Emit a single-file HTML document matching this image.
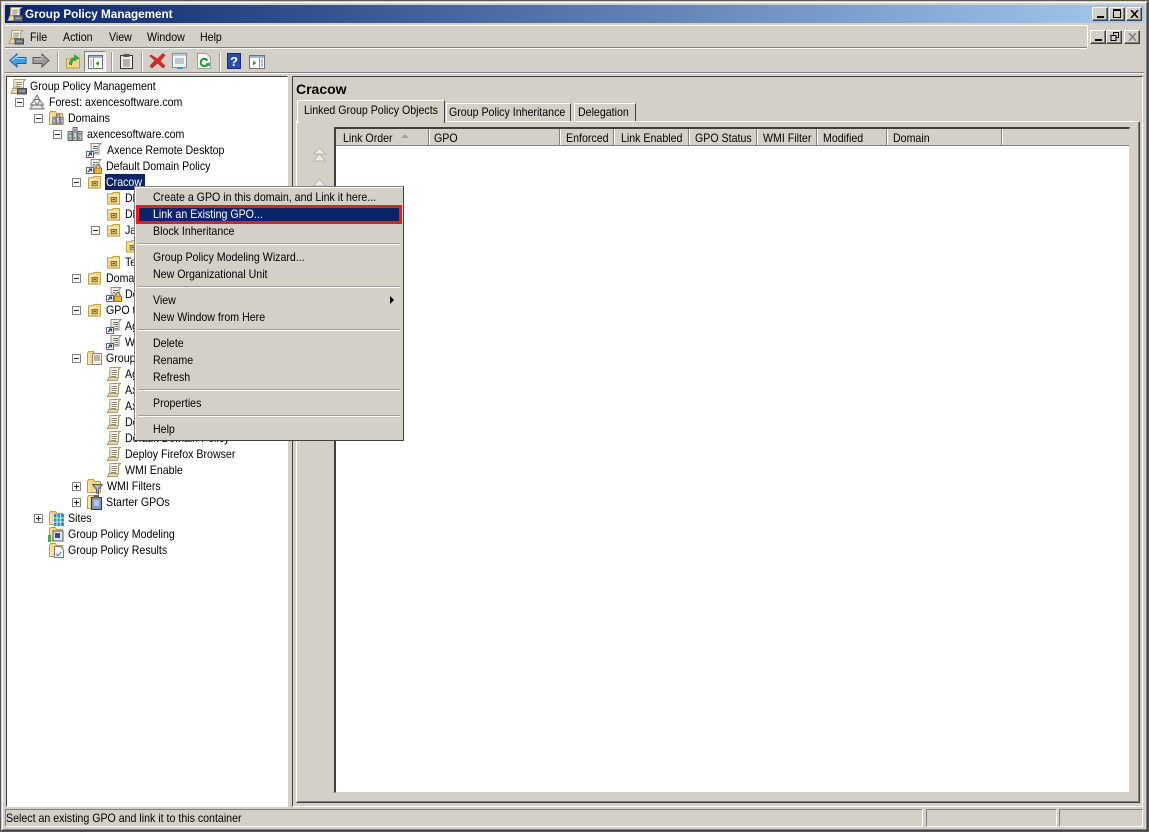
<!DOCTYPE html>
<html><head><meta charset="utf-8"><title>Group Policy Management</title>
<style>
html,body{margin:0;padding:0;background:#d4d0c8}
#w{position:relative;width:1149px;height:832px;overflow:hidden;background:#d4d0c8;font:12px "Liberation Sans",sans-serif;color:#000}
#w div,#w svg{position:absolute}
.t{position:absolute;white-space:nowrap;line-height:14px;height:14px;transform:scaleX(.885);transform-origin:0 0}
.sunk{box-sizing:border-box;border:1px solid;border-color:#808080 #fff #fff #808080}
.box{width:7px;height:7px;margin:1px 0 0 1px;background:#fff;border:1px solid #808080;box-sizing:content-box}
.box:before{content:"";position:absolute;left:1px;top:3px;width:5px;height:1px;background:#222}
.pl:after{content:"";position:absolute;left:3px;top:1px;width:1px;height:5px;background:#222}
.sep{height:1px;background:#a09d98;border-bottom:1px solid #fff;left:138px;width:262px}
.tb{width:1px;height:20px;background:#a09d98;box-shadow:1px 0 0 #fff;top:52px}
.btn{box-sizing:border-box;background:#d4d0c8;border:1px solid;border-color:#fff #404040 #404040 #fff;box-shadow:inset -1px -1px 0 #808080}
.col{top:129px;width:1px;height:16px;background:#808080;box-shadow:1px 0 0 #fff}
</style></head><body><div id="w">
<svg width="0" height="0" style="position:absolute"><defs>
<symbol id="scroll" viewBox="0 0 16 16"><path d="M4 1.500h10.500l-2 2V11l-1.500 3H1.500l2-3z" fill="#f8f2dc" stroke="#a89a70"/><path d="M5.500 4.500h5.500M5.500 6.500h5.500M5.500 8.500h5M5 10.500h5" stroke="#8c8c80"/><path d="M1.500 14.500h9.500l1-3H3z" fill="#ecd9a0" stroke="#a89a70"/></symbol>
<symbol id="root" viewBox="0 0 17 17"><path d="M4 1.500h11.500l-2 2V10H3.500z" fill="#f8f2dc" stroke="#a89a70"/><path d="M5.500 4.500h6.500M5.500 6.500h6.500M5.500 8.500h5" stroke="#8c8c80"/><path d="M1 15.500l2-5h8v5z" fill="#ecd9a0" stroke="#a89a70"/><rect x="7.500" y="10.500" width="9" height="5.500" fill="#6e7480" stroke="#444a52"/><path d="M9 13h6" stroke="#b8bec8"/></symbol>
<symbol id="link" viewBox="0 0 16 16"><path d="M5 1.500h10l-2 2V12h-5V9H5z" fill="#f4f2ea" stroke="#8e8e8e"/><path d="M7 4.500h5M7 6.500h5M9 8.500h3M9 10.500h3" stroke="#777"/><rect x=".5" y="9.500" width="7" height="6" fill="#fff" stroke="#666"/><path d="M2 14l3-3M3 11h2.500v2.500" stroke="#1c3fa8" stroke-width="1.300" fill="none"/></symbol>
<symbol id="lock" viewBox="0 0 16 16"><path d="M5 1.500h10l-2 2V8H5z" fill="#f4f2ea" stroke="#8e8e8e"/><path d="M7 4.500h5M7 6.500h2" stroke="#777"/><rect x=".5" y="9.500" width="7" height="6" fill="#fff" stroke="#666"/><path d="M2 14l3-3M3 11h2.500v2.500" stroke="#1c3fa8" stroke-width="1.300" fill="none"/><rect x="8.500" y="10" width="7" height="5.500" fill="#e8b23c" stroke="#a8761a"/><path d="M10 10V8.300a2 2 0 0 1 4 0V10" fill="none" stroke="#8a7a50" stroke-width="1.200"/></symbol>
<symbol id="ou" viewBox="0 0 16 16"><path d="M1.500 3.500h5l1-1.500h7v12.500h-13z" fill="#f6d987" stroke="#b89c50"/><path d="M2.500 5.500h11" stroke="#fff3c0"/><rect x="5.500" y="7.500" width="5.500" height="4.500" fill="#d9bc62" stroke="#7d6c38"/><path d="M7 9.500h2.500" stroke="#444"/></symbol>
<symbol id="folder" viewBox="0 0 16 16"><path d="M1.500 14.500V3l1-1.500h5l1 2h6v11z" fill="#f6d987" stroke="#b89c50"/><path d="M3 14V4.500" stroke="#fff3c0"/></symbol>
<symbol id="forest" viewBox="0 0 16 16"><path d="M8 1l2.500 4.500h-5zM5 6l3 5H1.500zM11 6l3.500 5H8zM1 15l3-4h8l3 4z" fill="#e6e6e6" stroke="#6e6e6e" stroke-width=".9"/></symbol>
<symbol id="dom" viewBox="0 0 16 16"><path d="M6 1.500h4v13H6z" fill="#c9d2d6" stroke="#667"/><path d="M1 5.500h4v9H1zM11 5.500h4v9h-4z" fill="#b9c4c9" stroke="#667"/><path d="M7 4h2M7 6h2M2 8h2M12 8h2" stroke="#556"/><path d="M2 12h1M7 12h1M12 12h1" stroke="#2bb52b" stroke-width="2"/></symbol>
</defs></svg>

<!-- outer frame -->
<div style="left:0;top:0;width:1149px;height:832px;box-sizing:border-box;border:1px solid #5a5a5a"></div>
<div style="left:1px;top:1px;width:1147px;height:830px;box-sizing:border-box;border:1px solid #d4d0c8;border-right-color:#404040;border-bottom-color:#404040"></div>
<div style="left:2px;top:2px;width:1145px;height:828px;box-sizing:border-box;border:1px solid #fff;border-right-color:#808080;border-bottom-color:#808080"></div>
<!-- title bar -->
<div style="left:5px;top:5px;width:1139px;height:18px;background:linear-gradient(90deg,#0a246a 0,#a6caf0 100%)"></div>
<svg style="left:7px;top:6px" width="16" height="16"><use href="#root"/></svg>
<div class="t" style="left:25px;top:7px;color:#fff;font-weight:bold;transform:scaleX(.975)">Group Policy Management</div>
<div class="btn" style="left:1092px;top:7px;width:16px;height:14px"><div style="left:4px;top:8px;width:7px;height:2px;background:#000"></div></div>
<div class="btn" style="left:1109px;top:7px;width:16px;height:14px"><div style="left:3px;top:1px;width:8px;height:9px;box-sizing:border-box;border:1px solid #000;border-top-width:2px"></div></div>
<div class="btn" style="left:1126px;top:7px;width:16px;height:14px"><svg style="left:3px;top:2px" width="9" height="8"><path d="M1 0l7 8M8 0L1 8" stroke="#000" stroke-width="1.500"/></svg></div>
<!-- menu bar -->
<div style="left:5px;top:25px;width:1082px;height:1px;background:#fff"></div>
<svg style="left:8px;top:29px" width="16" height="16"><use href="#root"/></svg>
<div class="t" style="left:30px;top:30px">File</div>
<div class="t" style="left:63px;top:30px">Action</div>
<div class="t" style="left:109px;top:30px">View</div>
<div class="t" style="left:147px;top:30px">Window</div>
<div class="t" style="left:200px;top:30px">Help</div>
<div style="left:1087px;top:25px;width:1px;height:23px;background:#fff"></div>
<div class="btn" style="left:1090px;top:30px;width:16px;height:14px"><div style="left:4px;top:8px;width:7px;height:2px;background:#000"></div></div>
<div class="btn" style="left:1106px;top:30px;width:16px;height:14px"><svg style="left:3px;top:1px" width="10" height="10"><path d="M3.500 2.500V.5h5v5h-2M1 3.500h5v5H1z" fill="none" stroke="#000"/></svg></div>
<div class="btn" style="left:1124px;top:30px;width:16px;height:14px"><svg style="left:3px;top:2px" width="9" height="8"><path d="M1 0l7 8M8 0L1 8" stroke="#808080" stroke-width="1.500"/></svg></div>
<div style="left:5px;top:47px;width:1082px;height:1px;background:#808080;box-shadow:0 1px 0 #fff"></div>
<!-- toolbar -->
<svg style="left:9px;top:53px" width="18" height="15"><path d="M.8 7.500L8 1v3.500h9v6H8V14z" fill="#3fa0e8" stroke="#1a62a8"/><path d="M3 7.500L8 3v2.500h8" fill="none" stroke="#a8dcff"/></svg>
<svg style="left:32px;top:53px" width="18" height="15"><path d="M17 7.500L10 1v3.500H1v6h9V14z" fill="#9a9a9a" stroke="#5a5a5a"/><path d="M2 6h8V3" fill="none" stroke="#c8c8c8"/></svg>
<div class="tb" style="left:57px"></div>
<svg style="left:65px;top:53px" width="16" height="16"><path d="M1.500 15V6h4l1-1h8v10z" fill="#f6d987" stroke="#b89c50"/><path d="M4 11C5 7 7 5 9.500 4.500V2L14 5l-4.500 3V6C8 7 7 9 6.500 12z" fill="#3cb43c" stroke="#1f7a1f" stroke-width=".6"/></svg>
<div style="left:84px;top:51px;width:22px;height:21px;box-sizing:border-box;border:1px solid #808080;border-right-color:#fff;border-bottom-color:#fff;background:#ecebe7"></div>
<svg style="left:88px;top:55px" width="15" height="14"><rect x=".5" y=".5" width="14" height="13" fill="#fff" stroke="#6e6e78"/><rect x="1" y="1" width="13" height="2" fill="#9cb0d0"/><path d="M5.500 3v10" stroke="#8a8a90"/><path d="M2 5h2M2 7h2M2 9h2M2 11h2" stroke="#9aa"/><path d="M11 6v5L7.500 8.500z" fill="#2fa02f"/></svg>
<div class="tb" style="left:111px"></div>
<svg style="left:119px;top:53px" width="15" height="16"><rect x="1.500" y="2.500" width="12" height="13" fill="#eeeeea" stroke="#333"/><rect x="4.500" y="1" width="6" height="3" fill="#555"/><path d="M4 7h7M4 9h7M4 11h7M4 13h7" stroke="#777"/></svg>
<div class="tb" style="left:141px"></div>
<svg style="left:149px;top:52px" width="17" height="17"><path d="M2 3l6.500 4L14 1.500l2 2-5 5.500 5 5-2 2-5.500-5L3 16 1 14l5-5.500L1 4z" fill="#dd2a2a" stroke="#b01c1c" stroke-width=".6"/></svg>
<svg style="left:172px;top:53px" width="16" height="16"><rect x=".5" y=".5" width="14" height="14" fill="#f6f6f6" stroke="#8a929c"/><rect x="1" y="1" width="13" height="2" fill="#c0ccd8"/><path d="M3 6h9M3 8h9M3 10h9" stroke="#8a98a8"/><path d="M5 15h6" stroke="#2aa0e0" stroke-width="2"/></svg>
<svg style="left:197px;top:53px" width="15" height="16"><path d="M.5.5h9l4 4v11H.5z" fill="#f8f8f8" stroke="#a0a0a0"/><path d="M10.500 7.500a3.700 3.700 0 1 0 .5 3" fill="none" stroke="#1f9a2f" stroke-width="2"/><path d="M8 11l4.500-1.500.5 4z" fill="#1f9a2f"/></svg>
<div class="tb" style="left:219px"></div>
<svg style="left:227px;top:53px" width="14" height="16"><rect width="14" height="16" fill="#2a4cb0"/><rect x=".5" y=".5" width="13" height="15" fill="none" stroke="#1a2a70"/><text x="7" y="13" text-anchor="middle" font-family="Liberation Sans" font-weight="bold" font-size="13" fill="#fff">?</text></svg>
<svg style="left:249px;top:55px" width="16" height="14"><rect x=".5" y=".5" width="15" height="13" fill="#fff" stroke="#70707a"/><rect x="1" y="1" width="14" height="2" fill="#9cb0d0"/><path d="M10.500 3v10" stroke="#8a8a90"/><path d="M12 5h2M12 7h2M12 9h2M12 11h2" stroke="#6080c0"/><path d="M4 5.500v5L7.500 8z" fill="#2fa02f"/></svg>
<div style="left:5px;top:72px;width:1139px;height:1px;background:#808080;box-shadow:0 1px 0 #fff"></div>

<!-- tree pane -->
<div style="left:6px;top:76px;width:282px;height:731px;background:#fff;box-sizing:border-box;border:1px solid;border-color:#404040 #fff #fff #404040"></div>
<svg style="left:10px;top:78px" width="17" height="17"><use href="#root"/></svg>
<div class="t" style="left:30px;top:79px">Group Policy Management</div>

<div class="box" style="left:14px;top:97px"></div>
<svg style="left:29px;top:94px" width="16" height="16"><use href="#forest"/></svg>
<div class="t" style="left:49px;top:95px">Forest: axencesoftware.com</div>

<div class="box" style="left:33px;top:113px"></div>
<svg style="left:48px;top:110px" width="16" height="16"><use href="#folder"/></svg>
<svg style="left:52px;top:113px" width="12" height="12"><use href="#dom"/></svg>
<div class="t" style="left:68px;top:111px">Domains</div>

<div class="box" style="left:52px;top:129px"></div>
<svg style="left:67px;top:126px" width="16" height="16"><use href="#dom"/></svg>
<div class="t" style="left:87px;top:127px">axencesoftware.com</div>

<svg style="left:86px;top:142px" width="16" height="16"><use href="#link"/></svg>
<div class="t" style="left:107px;top:143px">Axence Remote Desktop</div>
<svg style="left:86px;top:158px" width="16" height="16"><use href="#lock"/></svg>
<div class="t" style="left:106px;top:159px">Default Domain Policy</div>

<div class="box" style="left:71px;top:177px"></div>
<svg style="left:87px;top:174px" width="15" height="16"><use href="#ou"/></svg>
<div style="left:105px;top:174px;width:40px;height:16px;background:#0a246a"></div>
<div class="t" style="left:106px;top:175px;color:#fff">Cracow</div>

<svg style="left:106px;top:190px" width="15" height="16"><use href="#ou"/></svg>
<div class="t" style="left:125px;top:191px">Dl</div>
<svg style="left:106px;top:206px" width="15" height="16"><use href="#ou"/></svg>
<div class="t" style="left:125px;top:207px">Dl</div>
<div class="box" style="left:90px;top:225px"></div>
<svg style="left:106px;top:222px" width="15" height="16"><use href="#ou"/></svg>
<div class="t" style="left:125px;top:223px">Ja</div>
<svg style="left:125px;top:238px" width="15" height="16"><use href="#ou"/></svg>
<svg style="left:106px;top:254px" width="15" height="16"><use href="#ou"/></svg>
<div class="t" style="left:125px;top:255px">Te</div>

<div class="box" style="left:71px;top:273px"></div>
<svg style="left:87px;top:270px" width="15" height="16"><use href="#ou"/></svg>
<div class="t" style="left:106px;top:271px">Domain</div>
<svg style="left:106px;top:286px" width="16" height="16"><use href="#lock"/></svg>
<div class="t" style="left:125px;top:287px">De</div>

<div class="box" style="left:71px;top:305px"></div>
<svg style="left:87px;top:302px" width="15" height="16"><use href="#ou"/></svg>
<div class="t" style="left:106px;top:303px">GPO test</div>
<svg style="left:106px;top:318px" width="16" height="16"><use href="#link"/></svg>
<div class="t" style="left:125px;top:319px">Ag</div>
<svg style="left:106px;top:334px" width="16" height="16"><use href="#link"/></svg>
<div class="t" style="left:125px;top:335px">W</div>

<div class="box" style="left:71px;top:353px"></div>
<svg style="left:86px;top:350px" width="16" height="16"><use href="#folder"/></svg>
<svg style="left:92px;top:353px" width="10" height="12"><path d="M.5.5h9v11h-9z" fill="#f6efd6" stroke="#888"/><path d="M2 3h6M2 5h6M2 7h6" stroke="#777"/></svg>
<div class="t" style="left:106px;top:351px">Group</div>

<svg style="left:106px;top:366px" width="16" height="16"><use href="#scroll"/></svg>
<div class="t" style="left:125px;top:367px">Ag</div>
<svg style="left:106px;top:382px" width="16" height="16"><use href="#scroll"/></svg>
<div class="t" style="left:125px;top:383px">Ax</div>
<svg style="left:106px;top:398px" width="16" height="16"><use href="#scroll"/></svg>
<div class="t" style="left:125px;top:399px">Ax</div>
<svg style="left:106px;top:414px" width="16" height="16"><use href="#scroll"/></svg>
<div class="t" style="left:125px;top:415px">De</div>
<svg style="left:106px;top:430px" width="16" height="16"><use href="#scroll"/></svg>
<div class="t" style="left:125px;top:431px">Default Domain Policy</div>
<svg style="left:106px;top:446px" width="16" height="16"><use href="#scroll"/></svg>
<div class="t" style="left:125px;top:447px">Deploy Firefox Browser</div>
<svg style="left:106px;top:462px" width="16" height="16"><use href="#scroll"/></svg>
<div class="t" style="left:125px;top:463px">WMI Enable</div>

<div class="box pl" style="left:71px;top:481px"></div>
<svg style="left:86px;top:478px" width="16" height="16"><use href="#folder"/></svg>
<svg style="left:92px;top:484px" width="11" height="11"><path d="M.5.500h10L6.500 5.500V10l-2-1V5.500z" fill="#a8b0b8" stroke="#556"/></svg>
<div class="t" style="left:107px;top:479px">WMI Filters</div>

<div class="box pl" style="left:71px;top:497px"></div>
<svg style="left:86px;top:494px" width="16" height="16"><use href="#folder"/></svg>
<svg style="left:91px;top:495px" width="11" height="15"><rect x=".5" y="2.500" width="10" height="12" fill="#7c9ac8" stroke="#334"/><rect x="3" y="0" width="5" height="3" fill="#7a5c3c"/><path d="M3 6h5M3 8h5M3 10h5" stroke="#eef"/></svg>
<div class="t" style="left:106px;top:495px">Starter GPOs</div>

<div class="box pl" style="left:33px;top:513px"></div>
<svg style="left:48px;top:510px" width="16" height="16"><use href="#folder"/></svg>
<svg style="left:54px;top:514px" width="10" height="12"><rect width="10" height="12" fill="#2a8fd0"/><path d="M3 0v12M6.500 0v12M0 4h10M0 8h10" stroke="#cfe8ff"/></svg>
<div class="t" style="left:68px;top:511px">Sites</div>

<svg style="left:48px;top:526px" width="16" height="16"><use href="#folder"/></svg>
<svg style="left:48px;top:530px" width="16" height="12"><rect x="5" y="1" width="10" height="10" fill="#dfe6f0" stroke="#556"/><rect x="7" y="3" width="5" height="5" fill="#2a50b0"/><rect x="0" y="5" width="3" height="7" fill="#4aa84a"/></svg>
<div class="t" style="left:68px;top:527px">Group Policy Modeling</div>
<svg style="left:48px;top:542px" width="16" height="16"><use href="#folder"/></svg>
<svg style="left:54px;top:546px" width="10" height="12"><path d="M.5.500h6l3 3v8h-9z" fill="#fff" stroke="#778"/><path d="M2 8l2 2 3-4" stroke="#2a70b0" fill="none"/></svg>
<div class="t" style="left:68px;top:543px">Group Policy Results</div>

<!-- right pane -->
<div style="left:292px;top:76px;width:851px;height:731px;box-sizing:border-box;border:1px solid;border-color:#404040 #fff #fff #404040"></div>
<div class="t" style="left:296px;top:82px;font-weight:bold;font-size:14px;transform:none">Cracow</div>
<!-- tab panel -->
<div style="left:296px;top:121px;width:844px;height:682px;box-sizing:border-box;border:1px solid;border-color:#fff #404040 #404040 #fff;box-shadow:inset -1px -1px 0 #808080"></div>
<!-- tabs -->
<div style="left:297px;top:100px;width:148px;height:23px;background:#d4d0c8;box-sizing:border-box;border-top:1px solid #fff;border-left:1px solid #fff;border-right:1px solid #404040"></div>
<div class="t" style="left:304px;top:103px">Linked Group Policy Objects</div>
<div style="left:446px;top:103px;width:125px;height:18px;box-sizing:border-box;border-top:1px solid #fff;border-left:1px solid #fff;border-right:1px solid #404040"></div>
<div class="t" style="left:449px;top:105px">Group Policy Inheritance</div>
<div style="left:574px;top:103px;width:62px;height:18px;box-sizing:border-box;border-top:1px solid #fff;border-left:1px solid #fff;border-right:1px solid #404040"></div>
<div class="t" style="left:578px;top:105px">Delegation</div>
<!-- arrows -->
<svg style="left:312px;top:147px" width="15" height="16"><path d="M7.500 1l6 6h-12z" fill="#eeece8" stroke="#b8b6b0"/><path d="M7.500 7l6 7h-12z" fill="#eeece8" stroke="#b8b6b0"/></svg>
<svg style="left:312px;top:178px" width="15" height="10"><path d="M7.500 1l6 7h-12z" fill="#eeece8" stroke="#b8b6b0"/></svg>
<!-- list -->
<div style="left:334px;top:127px;width:796px;height:666px;background:#fff;box-sizing:border-box;border-style:solid;border-color:#404040 #d4d0c8 #d4d0c8 #404040;border-width:2px 1px 1px 2px"></div>
<div style="left:336px;top:129px;width:793px;height:16px;background:#d4d0c8;border-bottom:1px solid #808080"></div>
<div class="col" style="left:428px"></div>
<div class="col" style="left:559px"></div>
<div class="col" style="left:613px"></div>
<div class="col" style="left:688px"></div>
<div class="col" style="left:756px"></div>
<div class="col" style="left:816px"></div>
<div class="col" style="left:886px"></div>
<div class="col" style="left:1001px"></div>
<div class="t" style="left:343px;top:131px">Link Order</div>
<svg style="left:401px;top:134px" width="8" height="5"><path d="M4 0l4 4H0z" fill="#a0a0a0"/></svg>
<div class="t" style="left:434px;top:131px">GPO</div>
<div class="t" style="left:566px;top:131px">Enforced</div>
<div class="t" style="left:621px;top:131px">Link Enabled</div>
<div class="t" style="left:695px;top:131px">GPO Status</div>
<div class="t" style="left:763px;top:131px">WMI Filter</div>
<div class="t" style="left:823px;top:131px">Modified</div>
<div class="t" style="left:893px;top:131px">Domain</div>

<!-- context menu -->
<div style="left:134px;top:186px;width:270px;height:255px;background:#d4d0c8;box-sizing:border-box;border:1px solid;border-color:#808080 #404040 #404040 #808080;box-shadow:inset 1px 1px 0 #fff"></div>
<div style="left:136px;top:205px;width:266px;height:19px;box-sizing:border-box;background:#0a246a;border:3px solid #ed1c24"></div>
<div class="t" style="left:153px;top:190px">Create a GPO in this domain, and Link it here...</div>
<div class="t" style="left:153px;top:207px;color:#fff">Link an Existing GPO...</div>
<div class="t" style="left:153px;top:224px">Block Inheritance</div>
<div class="sep" style="top:243px"></div>
<div class="t" style="left:153px;top:250px">Group Policy Modeling Wizard...</div>
<div class="t" style="left:153px;top:267px">New Organizational Unit</div>
<div class="sep" style="top:286px"></div>
<div class="t" style="left:153px;top:293px">View</div>
<svg style="left:390px;top:296px" width="5" height="8"><path d="M0 0l4 4-4 4z" fill="#000"/></svg>
<div class="t" style="left:153px;top:310px">New Window from Here</div>
<div class="sep" style="top:329px"></div>
<div class="t" style="left:153px;top:336px">Delete</div>
<div class="t" style="left:153px;top:353px">Rename</div>
<div class="t" style="left:153px;top:370px">Refresh</div>
<div class="sep" style="top:389px"></div>
<div class="t" style="left:153px;top:396px">Properties</div>
<div class="sep" style="top:415px"></div>
<div class="t" style="left:153px;top:422px">Help</div>

<!-- status bar -->
<div class="sunk" style="left:5px;top:809px;width:918px;height:18px"></div>
<div class="sunk" style="left:926px;top:809px;width:131px;height:18px"></div>
<div class="sunk" style="left:1059px;top:809px;width:84px;height:18px"></div>
<div class="t" style="left:6px;top:811px">Select an existing GPO and link it to this container</div>
</div></body></html>
